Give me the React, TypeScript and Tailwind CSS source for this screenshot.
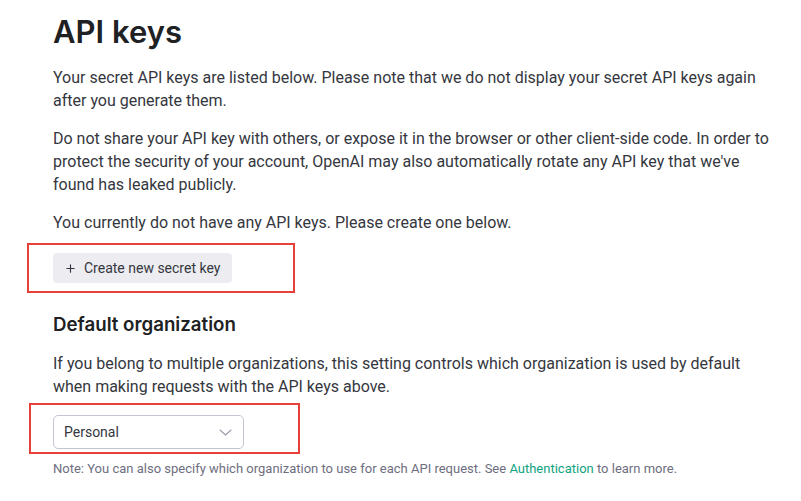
import React from "react";

const ChevronDown = () => (
  <svg width="13" height="7" viewBox="0 0 13 7" fill="none" stroke="#9a9aab" strokeWidth="1.1" strokeLinecap="round" strokeLinejoin="round">
    <path d="M1 1l5.5 5 5.5-5" />
  </svg>
);

const PlusIcon = () => (
  <svg width="11" height="11" viewBox="0 0 24 24" fill="none" stroke="#353740" strokeWidth="2.5" strokeLinecap="round">
    <path d="M12 4v16M4 12h16" />
  </svg>
);

const body = "text-[16px] leading-[23px] whitespace-nowrap";

export default function App() {
  return (
    <div
      className="w-[801px] h-[501px] bg-white overflow-hidden pl-[53px] pt-[14px] text-[#353740]"
      style={{ fontFamily: "Roboto, 'Noto Sans', sans-serif" }}
    >
      <h1 className="font-[Inter] text-[31px] leading-[36px] font-semibold text-[#202123] mb-4">API keys</h1>

      <p className={`${body} mb-[15px]`}>
        Your secret API keys are listed below. Please note that we do not display your secret API keys again
        <br />
        after you generate them.
      </p>
      <p className={`${body} mb-[15px]`}>
        Do not share your API key with others, or expose it in the browser or other client-side code. In order to
        <br />
        protect the security of your account, OpenAI may also automatically rotate any API key that we've
        <br />
        found has leaked publicly.
      </p>
      <p className={body}>You currently do not have any API keys. Please create one below.</p>

      <div className="mt-[9px] -ml-[26px] w-[268px] border-2 border-[#e6403a] pl-[24px] py-[8px]">
        <button className="h-[30px] flex items-center gap-[8px] px-[12px] rounded-[4px] bg-[#ececf1] text-[14px] text-[#353740]">
          <PlusIcon />
          <span>Create new secret key</span>
        </button>
      </div>

      <h2 className="font-[Inter] mt-[18px] mb-[13px] text-[18.7px] leading-[28px] font-semibold text-[#202123]">Default organization</h2>

      <p className={body}>
        If you belong to multiple organizations, this setting controls which organization is used by default
        <br />
        when making requests with the API keys above.
      </p>

      <div className="mt-[5px] -ml-[24px] w-[271px] border-2 border-[#e6403a] pl-[22px] pt-[10px] pb-[3px]">
        <div className="w-[191px] h-[34px] flex items-center justify-between pl-[10px] pr-[11px] border border-[#c5c5d2] rounded-[5px] text-[14px] text-[#353740]">
          <span>Personal</span>
          <ChevronDown />
        </div>
      </div>

      <p className="mt-[6px] text-[13px] leading-[17px] text-[#6e6e80] whitespace-nowrap">
        Note: You can also specify which organization to use for each API request. See{" "}
        <span className="text-[#10a37f]">Authentication</span> to learn more.
      </p>
    </div>
  );
}
